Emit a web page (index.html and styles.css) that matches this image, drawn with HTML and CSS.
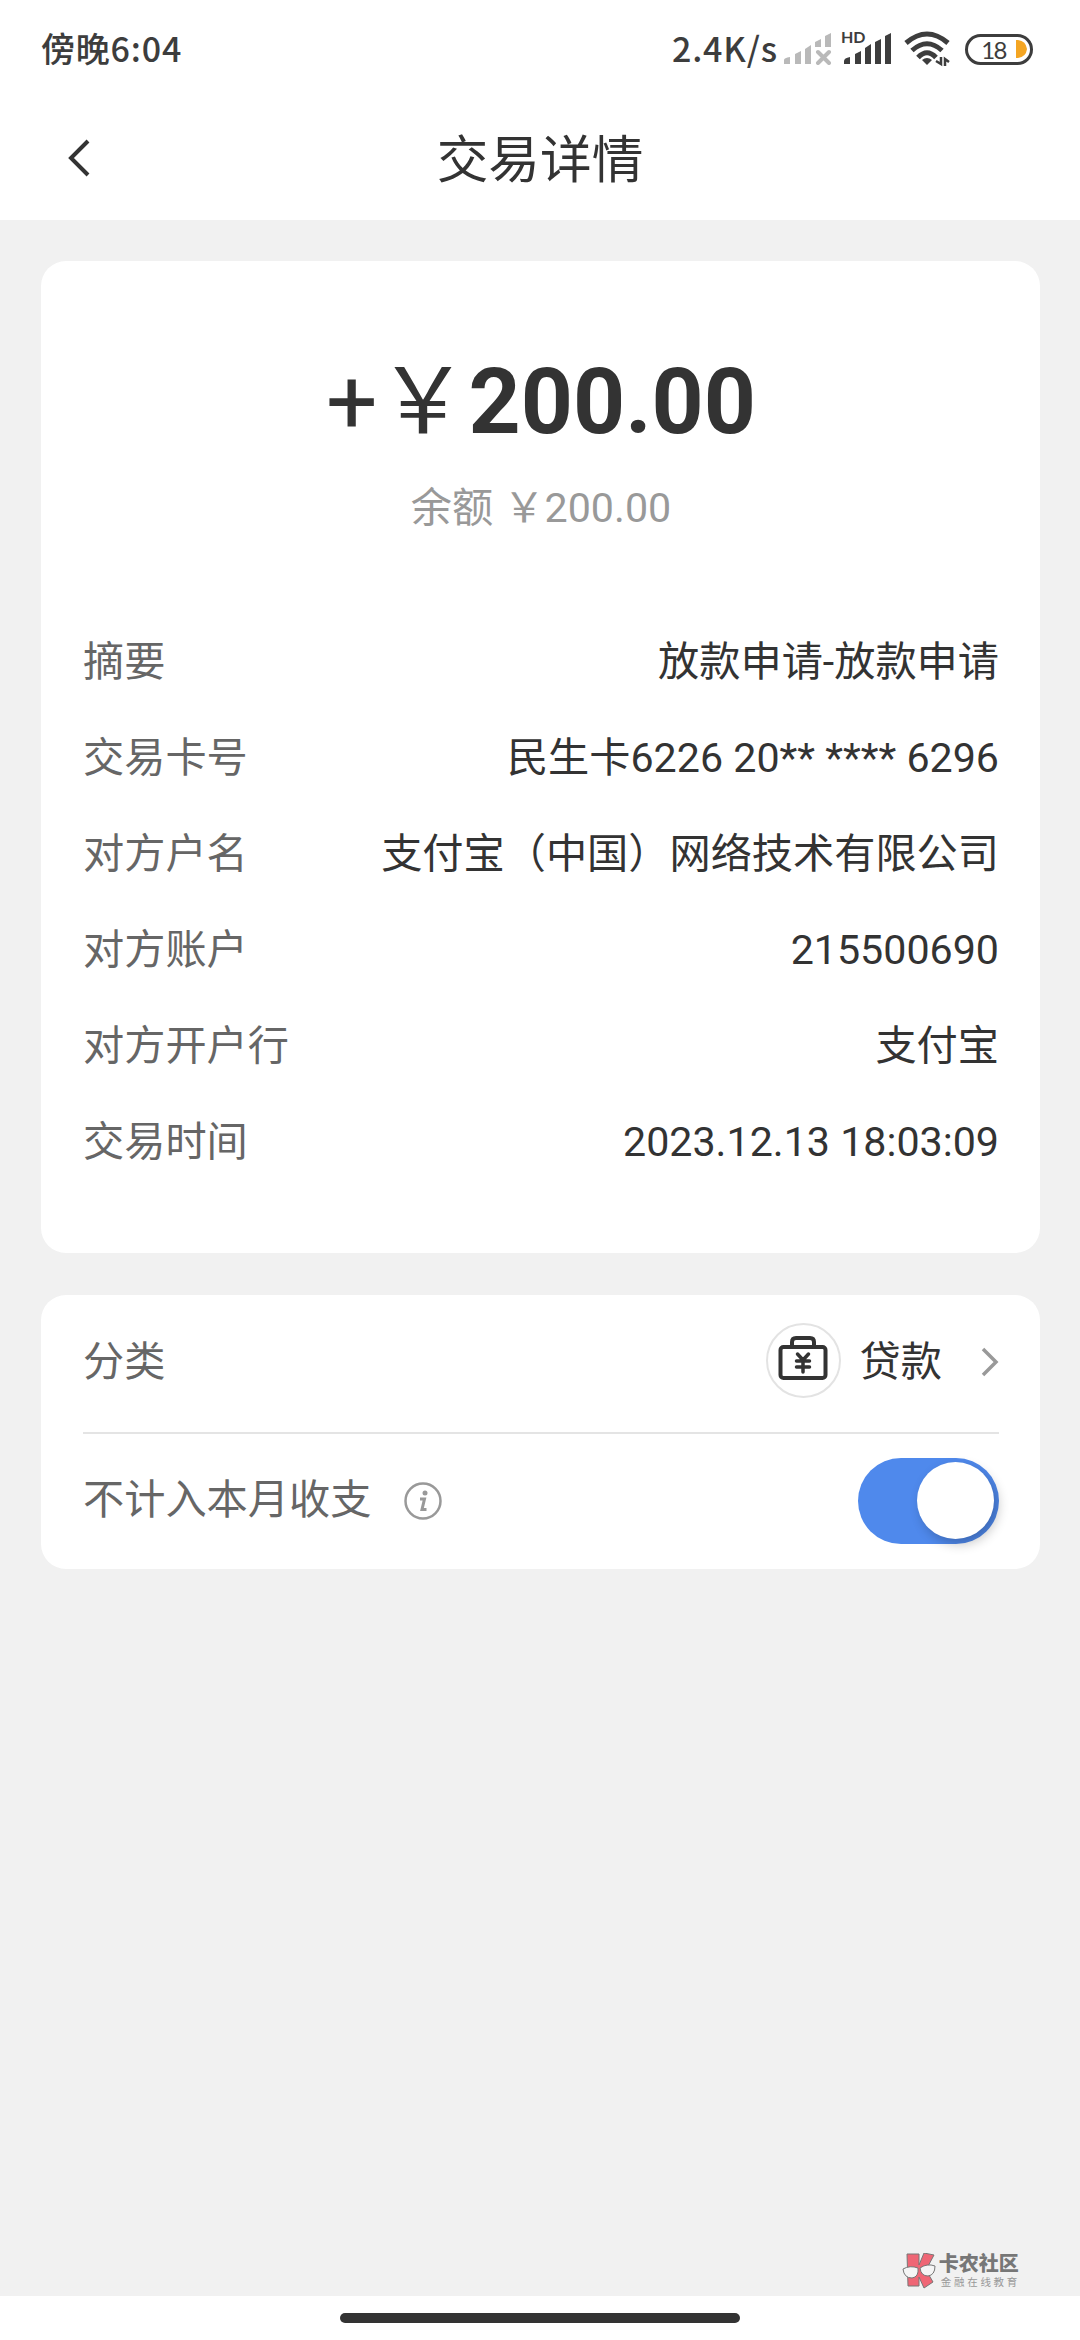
FILE: index.html
```html
<!DOCTYPE html>
<html lang="zh-CN">
<head>
<meta charset="utf-8">
<title>交易详情</title>
<link rel="stylesheet" href="styles.css">
</head>
<body>
<header class="status">
  <span class="clock">傍晚6:04</span>
  <div class="indicators">
    <span class="speed">2.4K/s</span>
    <svg class="sim" width="48" height="32" viewBox="0 0 48 32" fill="#b9b9b9">
      <path d="M0 31V27Q0 25 6 24V31ZM11 31V21L17 18V31ZM21 31V16L27 12V31ZM31 14V9L37 6V14ZM41 14V3L47 0V14Z"/>
      <path d="M34 19L45 30M45 19L34 30" stroke="#b9b9b9" stroke-width="4" stroke-linecap="round"/>
    </svg>
    <span class="hd-signal">
      <span class="hd">HD</span>
      <svg width="48" height="32" viewBox="0 0 48 32" fill="#3d3d3d"><path d="M0 31V28Q0 25 6 24V31ZM11 31V21L17 18V31ZM21 31V15L27 11V31ZM31 31V9L37 6V31ZM41 31V3L47 0V31Z"/></svg>
    </span>
    <svg class="wifi" width="47" height="36" viewBox="0 0 47 36" fill="none" stroke="#3d3d3d" stroke-width="5">
      <path d="M2 12Q23-6 44 12M8 19.500Q23 6 38 19.500M14 26.500Q23 17 32 26.500"/>
      <path d="M18 29Q23 25 28 29L23 34Z" fill="#3d3d3d" stroke="none"/>
      <path d="M37 26V33L32 30M41 35V28L45 31" stroke-width="2.500"/>
    </svg>
    <span class="battery"><span class="level">18</span><svg width="11" height="18" viewBox="0 0 11 18"><path d="M0 0H2Q10 1 11 9Q10 17 2 18H0Z" fill="#f4a522"/></svg></span>
  </div>
</header>
<nav class="titlebar">
  <svg class="back" width="24" height="38" viewBox="0 0 24 38" fill="none" stroke="#333" stroke-width="4"><path d="M21 2L4 19L21 36"/></svg>
  <h1>交易详情</h1>
</nav>
<main>
  <section class="card detail">
    <div class="amount"><span class="sign">+￥</span>200.00</div>
    <div class="balance">余额 ￥200.00</div>
    <dl>
      <div class="row"><dt>摘要</dt><dd>放款申请-放款申请</dd></div>
      <div class="row"><dt>交易卡号</dt><dd>民生卡6226 20** **** 6296</dd></div>
      <div class="row"><dt>对方户名</dt><dd>支付宝（中国）网络技术有限公司</dd></div>
      <div class="row"><dt>对方账户</dt><dd>215500690</dd></div>
      <div class="row"><dt>对方开户行</dt><dd>支付宝</dd></div>
      <div class="row"><dt>交易时间</dt><dd>2023.12.13 18:03:09</dd></div>
    </dl>
  </section>
  <section class="card options">
    <div class="option category">
      <span class="label">分类</span>
      <span class="badge"><svg width="50" height="46" viewBox="0 0 50 46" fill="none" stroke="#333" stroke-width="4" stroke-linecap="round" stroke-linejoin="round"><rect x="2.500" y="12" width="45" height="31" rx="3"/><path d="M14 11V7Q14 3 18 3H32Q36 3 36 7V11"/><path d="M19.500 19L25 25L30.500 19M18.500 26H31.500M18.500 32H31.500M25 26V37" stroke-width="3.500"/></svg></span>
      <span class="value">贷款</span>
      <svg class="chevron" width="18" height="30" viewBox="0 0 18 30" fill="none" stroke="#999" stroke-width="3.500"><path d="M2 2L15 15L2 28"/></svg>
    </div>
    <div class="option exclude">
      <span class="label">不计入本月收支</span>
      <svg class="info" width="40" height="40" viewBox="0 0 40 40" fill="none" stroke="#999" stroke-width="2.500"><circle cx="20" cy="20" r="17.500"/><circle cx="22" cy="12" r="2.500" fill="#999" stroke="none"/><path d="M17 18H21.500L19 28.500H23.500" stroke-width="3"/></svg>
      <span class="toggle"><span class="knob"></span></span>
    </div>
  </section>
  <div class="watermark">
    <svg width="34" height="36" viewBox="0 0 34 36" stroke="#777" stroke-width="1"><path d="M5 1H17V12L22 0L32 2L24 17L31 29L22 35L17 24V33H6Z" fill="#ef6675"/><path d="M1 16Q8 12 16 15Q17 24 10 25Q2 25 1 16ZM18 15Q25 10 33 13Q33 22 26 23Q19 23 18 15Z" fill="#f5f5f5"/></svg>
    <div class="brand"><b>卡农社区</b><small>金融在线教育</small></div>
  </div>
</main>
<footer><span class="home"></span></footer>
</body>
</html>
```
FILE: styles.css
```css
* { box-sizing: border-box; }
body {
  margin: 0;
  height: 2340px;
  display: flex;
  flex-direction: column;
  background: #fff;
  color: #333;
  font: 41.200px/60px Roboto, "Noto Sans CJK SC", sans-serif;
}
.status {
  height: 98px;
  padding: 0 47px 0 41px;
  display: flex;
  align-items: center;
  justify-content: space-between;
  color: #3d3d3d;
  font: 500 34px/50px "Noto Sans CJK SC", sans-serif;
}
.clock { letter-spacing: .8px; padding-bottom: 2px; }
.indicators { display: flex; align-items: center; }
.speed { width: 108px; margin-right: 4px; padding-bottom: 2px; white-space: nowrap; letter-spacing: .8px; }
.sim { margin-right: 12px; }
.hd-signal { position: relative; display: flex; margin-right: 12px; }
.hd { position: absolute; left: -3px; top: -5px; font: 700 16px/18px Lato, sans-serif; }
.wifi { margin-right: 14px; }
.battery {
  width: 68px;
  height: 31px;
  border: 3px solid #3d3d3d;
  border-radius: 16px;
  display: flex;
  align-items: center;
  justify-content: flex-end;
  gap: 10px;
  padding-right: 3px;
}
.level { font: 400 24px/25px Lato, sans-serif; letter-spacing: -1.500px; }
.titlebar {
  height: 122px;
  display: grid;
  grid-template-columns: 160px 1fr 160px;
  align-items: center;
  padding-bottom: 2px;
}
.back { margin-left: 67px; }
h1 { margin: 0; padding-top: 6px; text-align: center; font-size: 51.700px; line-height: 80px; font-weight: 400; }
main {
  flex: 1;
  background: #f1f1f1;
  padding: 41px 40px 0 41px;
  display: flex;
  flex-direction: column;
}
.card { background: #fff; border-radius: 25px; padding: 0 41px 0 42px; }
.detail { height: 992px; padding-top: 81px; }
.amount { font-size: 91px; line-height: 120px; font-weight: 700; text-align: center; }
.sign { font-weight: 400; }
.balance { margin-top: 16px; color: #999; text-align: center; }
dl { margin: 76px 0 0; }
.row { height: 96px; display: flex; align-items: center; justify-content: space-between; }
dt, .label { color: #666; }
dd { margin: 0; }
.options { margin-top: 42px; height: 274px; }
.option { display: flex; align-items: center; }
.category { height: 139px; padding-bottom: 7px; border-bottom: 2px solid #e4e4e4; }
.category .label, .value { padding-top: 3px; }
.badge {
  width: 75px;
  height: 75px;
  margin-left: auto;
  border: 2px solid #e3e3e3;
  border-radius: 50%;
  display: flex;
  justify-content: center;
  padding-top: 10px;
}
.value { margin-left: 19px; }
.chevron { margin-left: 39px; margin-top: 3px; }
.exclude { height: 135px; padding-bottom: 2px; }
.exclude .label { padding-bottom: 2px; }
.info { margin-left: 32px; margin-top: 1px; }
.toggle {
  width: 141px;
  height: 86px;
  margin-left: auto;
  background: #4f89ec;
  border-radius: 43px;
  display: flex;
  align-items: center;
  justify-content: flex-end;
  padding-right: 5px;
}
.knob { width: 77px; height: 77px; border-radius: 50%; background: #fff; box-shadow: 4px 5px 12px rgba(0, 0, 0, .24); }
.watermark { margin: auto 20px 7px auto; display: flex; align-items: center; gap: 3px; }
.brand { display: flex; flex-direction: column; color: #777; }
.brand b { font: 900 20px/28px "Noto Sans CJK SC", sans-serif; margin-top: -5px; }
.brand small { font: 400 10.500px/15px "Noto Sans CJK SC", sans-serif; color: #999; letter-spacing: 2.700px; margin: -3px 0 0 2px; }
footer { height: 44px; display: flex; justify-content: center; align-items: flex-start; padding-top: 17px; }
.home { width: 400px; height: 10px; border-radius: 5px; background: #333; }
```
